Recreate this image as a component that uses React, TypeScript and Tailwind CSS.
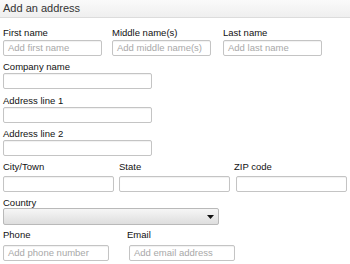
import React from "react";

const font = { fontFamily: '"Liberation Sans", Arial, sans-serif' };

function Label({ children, className = "" }: { children: React.ReactNode; className?: string }) {
  return (
    <div className={"h-[11px] leading-[11px] text-[9.5px] text-[#111] whitespace-nowrap " + className}>
      {children}
    </div>
  );
}

function Input({ placeholder, className = "" }: { placeholder?: string; className?: string }) {
  return (
    <div
      className={
        "h-[16px] border border-[#c4c4c4] rounded-[2px] bg-white shadow-[inset_0_1px_1px_rgba(0,0,0,0.06)] flex items-center pl-[4px] text-[9.5px] text-[#a8a8a8] whitespace-nowrap overflow-hidden " +
        className
      }
    >
      {placeholder}
    </div>
  );
}

export default function App() {
  return (
    <div className="w-[350px] h-[264px] bg-white overflow-hidden" style={font}>
      <div className="h-[18px] border-b border-[#dcdcdc] bg-gradient-to-b from-[#fafafa] to-[#efefef] px-[3px] flex items-center">
        <span className="text-[11px] text-[#333] leading-none">Add an address</span>
      </div>
      <div className="pl-[3px]">
        <div className="flex mt-[9px]">
          <div className="w-[99px]">
            <Label>First name</Label>
            <Input className="mt-[2px]" placeholder="Add first name" />
          </div>
          <div className="w-[99px] ml-[10px]">
            <Label>Middle name(s)</Label>
            <Input className="mt-[2px]" placeholder="Add middle name(s)" />
          </div>
          <div className="w-[99px] ml-[12px]">
            <Label>Last name</Label>
            <Input className="mt-[2px]" placeholder="Add last name" />
          </div>
        </div>
        <Label className="mt-[5px]">Company name</Label>
        <Input className="mt-px w-[149px]" />
        <Label className="mt-[6px]">Address line 1</Label>
        <Input className="mt-px w-[149px]" />
        <Label className="mt-[5px]">Address line 2</Label>
        <Input className="mt-px w-[149px]" />
        <div className="flex mt-[5px]">
          <div className="w-[111px]">
            <Label>City/Town</Label>
            <Input className="mt-[4px]" />
          </div>
          <div className="w-[111px] ml-[5px]">
            <Label>State</Label>
            <Input className="mt-[4px]" />
          </div>
          <div className="w-[111px] ml-[6px]">
            <Label className="-ml-[2px]">ZIP code</Label>
            <Input className="mt-[4px]" />
          </div>
        </div>
        <Label className="mt-[5px]">Country</Label>
        <div className="mt-0 w-[216px] h-[17px] border border-[#b9b9b9] rounded-[2px] bg-gradient-to-b from-[#f6f6f6] to-[#dedede] flex items-center justify-end pr-[4px]">
          <svg width="7" height="4" viewBox="0 0 7 4">
            <path d="M0 0 H7 L3.5 4 Z" fill="#111" />
          </svg>
        </div>
        <div className="flex mt-[4px]">
          <div className="w-[106px]">
            <Label>Phone</Label>
            <Input className="mt-[5px]" placeholder="Add phone number" />
          </div>
          <div className="w-[106px] ml-[20px]">
            <Label className="-ml-[2px]">Email</Label>
            <Input className="mt-[5px]" placeholder="Add email address" />
          </div>
        </div>
      </div>
    </div>
  );
}
